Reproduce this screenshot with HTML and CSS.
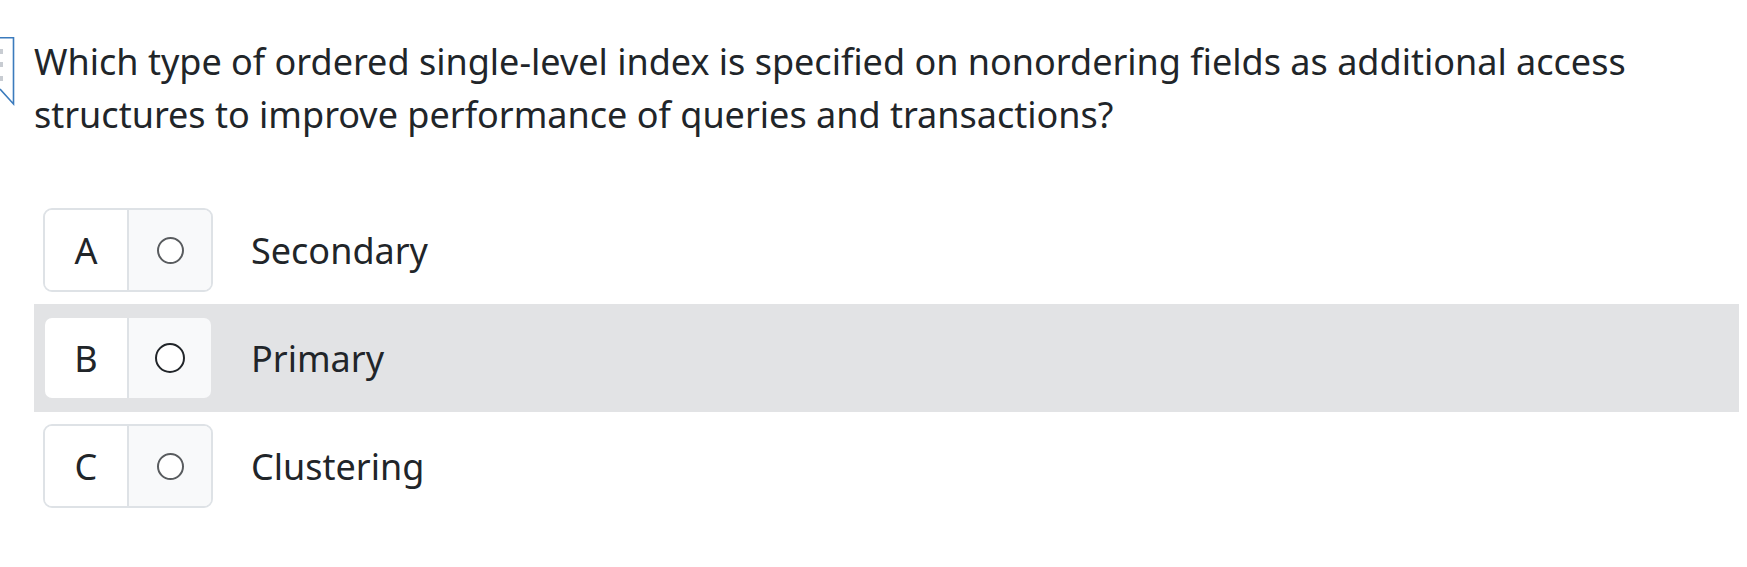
FILE: index.html
```html
<!DOCTYPE html>
<html lang="en">
<head>
<meta charset="utf-8">
<title>Question</title>
<link rel="stylesheet" href="styles.css">
</head>
<body>
<div class="page">
  <svg class="bookmark" width="16" height="70" viewBox="0 0 16 70" aria-hidden="true">
    <rect x="0" y="12" width="3" height="5" fill="#c8ccd2"/>
    <rect x="0" y="25" width="3" height="5" fill="#c8ccd2"/>
    <rect x="0" y="39" width="3" height="5" fill="#c8ccd2"/>
    <path d="M0 0.8 H13.5 V67 L0 52" fill="none" stroke="#3b7bbd" stroke-width="1.6"/>
  </svg>
  <p class="question">Which type of ordered single-level index is specified on nonordering fields as additional access structures to improve performance of queries and transactions?</p>
  <ul class="options">
    <li class="option">
      <div class="choice"><span class="letter">A</span><span class="radio-cell"><span class="radio"></span></span></div>
      <span class="label">Secondary</span>
    </li>
    <li class="option hover">
      <div class="choice"><span class="letter">B</span><span class="radio-cell"><span class="radio"></span></span></div>
      <span class="label">Primary</span>
    </li>
    <li class="option">
      <div class="choice"><span class="letter">C</span><span class="radio-cell"><span class="radio"></span></span></div>
      <span class="label">Clustering</span>
    </li>
  </ul>
</div>
</body>
</html>
```
FILE: styles.css
```css
html, body {
  margin: 0;
  padding: 0;
  background: #ffffff;
}
body {
  font-family: "Noto Sans", "Open Sans", sans-serif;
  color: #212529;
}
.page {
  position: relative;
  padding: 35px 8px 0 34px;
}
.bookmark {
  position: absolute;
  left: 0;
  top: 37px;
}
.question {
  margin: 0 0 55px 0;
  font-size: 36px;
  line-height: 53px;
  max-width: 1640px;
}
.options {
  list-style: none;
  margin: 0;
  padding: 0;
}
.option {
  display: flex;
  align-items: center;
  height: 108px;
  padding: 0 9px;
  box-sizing: border-box;
}
.option.hover {
  background: #e2e3e5;
}
.choice {
  display: flex;
  width: 170px;
  height: 84px;
  box-sizing: border-box;
  border: 2px solid #dee2e6;
  border-radius: 9px;
  overflow: hidden;
  flex-shrink: 0;
}
.option.hover .choice {
  border-color: #e2e3e5;
}
.letter {
  width: 82px;
  display: flex;
  align-items: center;
  justify-content: center;
  background: #ffffff;
  font-size: 36px;
  border-right: 2px solid #dee2e6;
}
.radio-cell {
  flex: 1;
  display: flex;
  align-items: center;
  justify-content: center;
  background: #f8f9fa;
}
.radio {
  width: 27px;
  height: 27px;
  box-sizing: border-box;
  border: 2px solid #595c5f;
  border-radius: 50%;
  background: #ffffff;
}
.option.hover .radio {
  width: 30px;
  height: 30px;
  border: 2.5px solid #212529;
}
.label {
  margin-left: 38px;
  font-size: 36px;
}
```
